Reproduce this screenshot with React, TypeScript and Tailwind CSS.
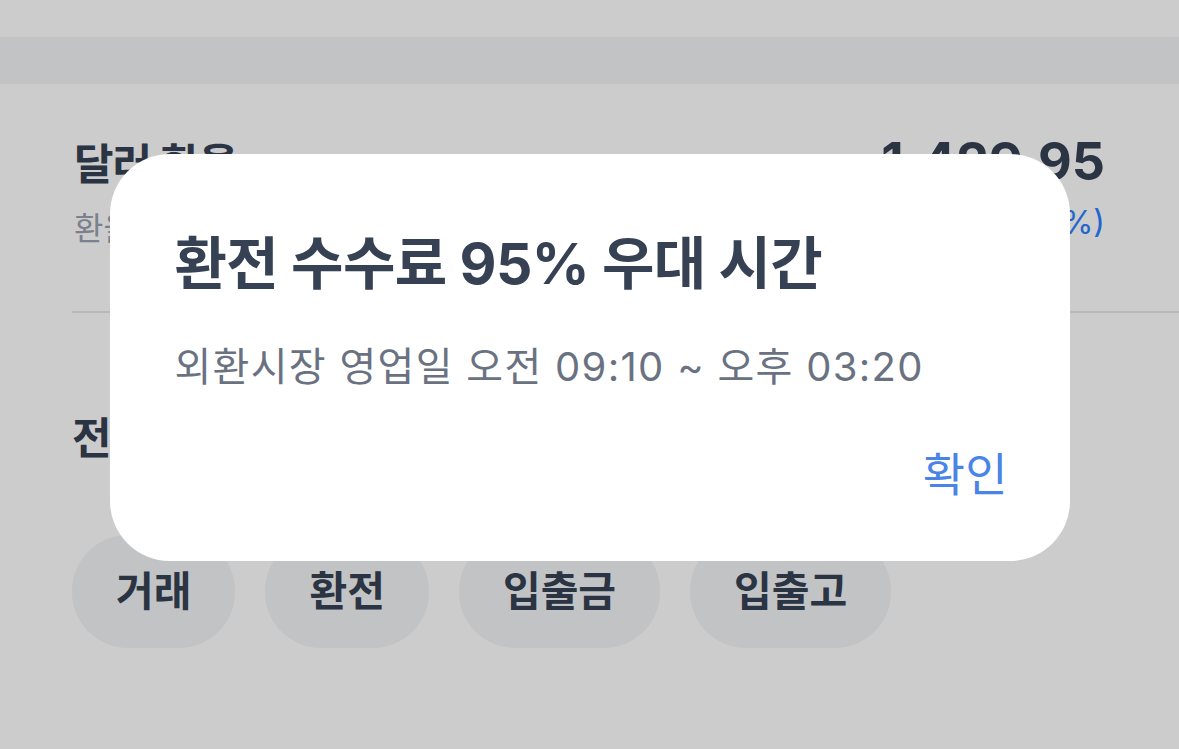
import React from "react";

const font = { fontFamily: 'Inter, "Noto Sans CJK KR", "Noto Sans", sans-serif' };

export default function App() {
  return (
    <div className="relative w-[1179px] h-[749px] overflow-hidden bg-white" style={font}>
      {/* Underlying page */}
      <div className="flex flex-col">
        <div className="h-[37px] bg-white" />
        <div className="h-[47px] bg-gray-100" />
        <div className="flex items-start justify-between px-[74px] pt-[52px]">
          <div className="flex flex-col pt-[7px]">
            <div className="text-[43px] leading-none font-bold text-gray-700 tracking-[-1px]">달러 환율</div>
            <div className="mt-[27px] text-[32px] leading-none text-gray-400">환율 정보 업데이트</div>
          </div>
          <div className="flex flex-col items-end">
            <div className="text-[52px] leading-none font-bold text-gray-700">1,429.95</div>
            <div className="mt-[19px] text-[32px] leading-none text-blue-500">+4.50 (+0.31%)</div>
          </div>
        </div>
        <div className="ml-[72px] mt-[66px] border-t-2 border-gray-200" />
        <div className="px-[72px] pt-[104px]">
          <div className="text-[43px] leading-none font-bold text-gray-700">전체 메뉴</div>
        </div>
        <div className="flex gap-[30px] px-[72px] pt-[75px]">
          {["거래", "환전", "입출금", "입출고"].map((t) => (
            <div
              key={t}
              className="h-[113px] px-[44px] rounded-[56px] bg-gray-100 flex items-center justify-center text-[41px] font-semibold text-gray-700"
            >
              {t}
            </div>
          ))}
        </div>
      </div>

      {/* Dim overlay */}
      <div className="absolute inset-0 bg-black/20" />

      {/* Modal */}
      <div className="absolute inset-0 flex justify-center pt-[154px]">
        <div className="w-[960px] h-[407px] rounded-[60px] bg-white flex flex-col pl-[65px] pr-[62px] pt-[81px]">
          <div className="text-[57px] leading-none font-bold text-gray-700 tracking-[-0.6px]">
            환전 수수료 95% 우대 시간
          </div>
          <div className="mt-[55px] text-[40px] leading-none text-gray-500 tracking-[1.3px]">
            외환시장 영업일 오전 09:10 ~ 오후 03:20
          </div>
          <div className="mt-[64px] flex justify-end">
            <span className="text-[46px] leading-none text-[#4a84e6]">확인</span>
          </div>
        </div>
      </div>
    </div>
  );
}
